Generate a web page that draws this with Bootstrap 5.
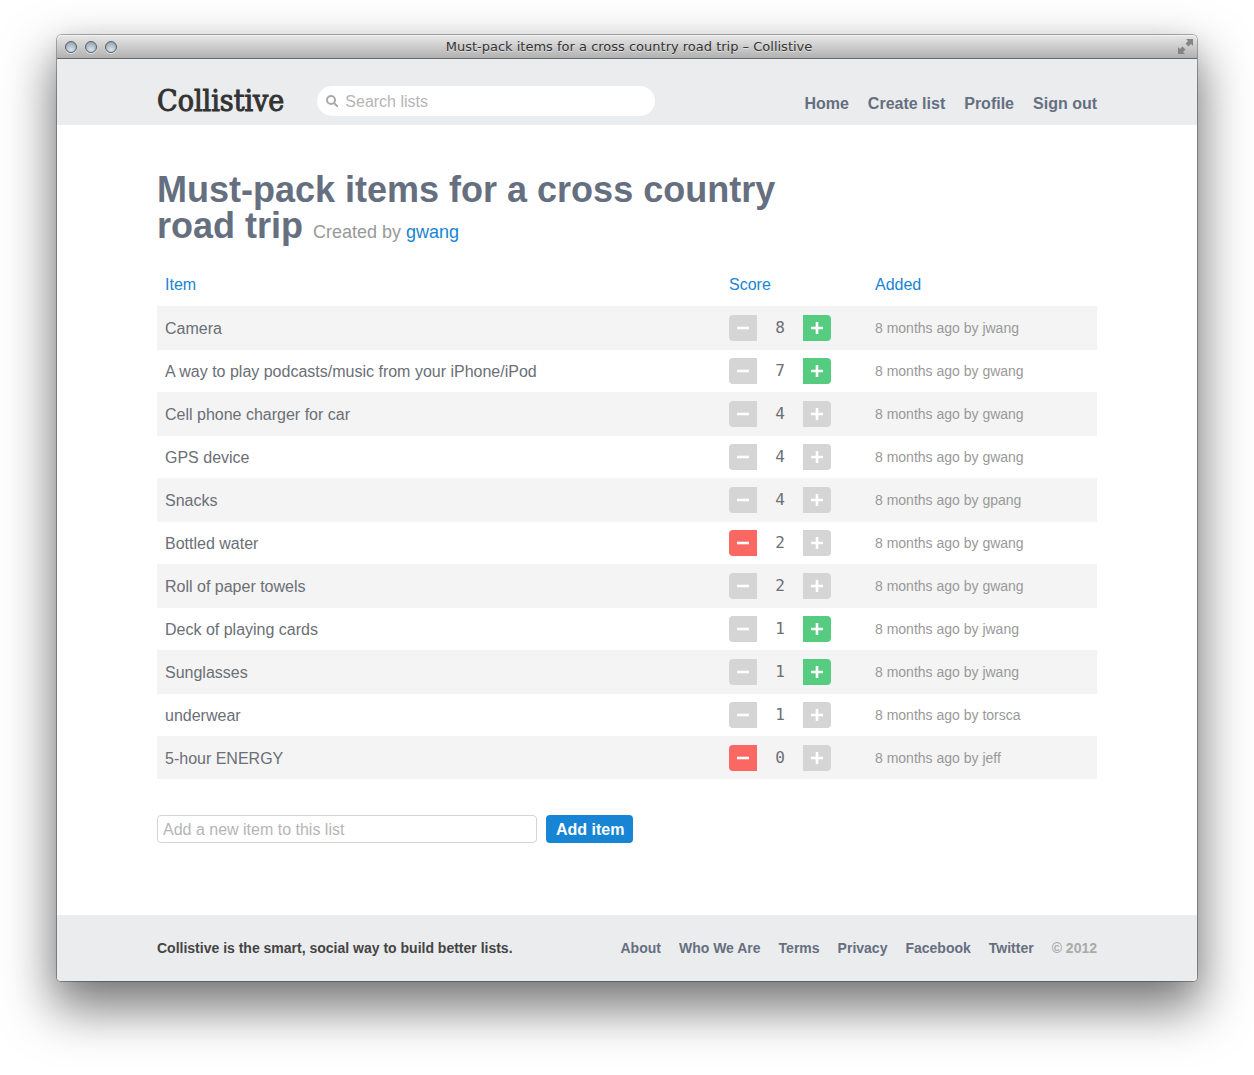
<!DOCTYPE html>
<html lang="en">
<head>
<meta charset="utf-8">
<meta name="viewport" content="width=device-width, initial-scale=1">
<title>Must-pack items for a cross country road trip – Collistive</title>
<link href="https://cdn.jsdelivr.net/npm/bootstrap@5.3.0/dist/css/bootstrap.min.css" rel="stylesheet">
<style>
  body { font-family: "Liberation Sans", Arial, sans-serif; font-size: 16px; line-height: 24px; color: #6b6f76; background: #fff; }
  a { color: #1785d3; text-decoration: none; }
  a:hover { text-decoration: underline; }
  .app-window { margin: 35px 57px 94px; border-radius: 5px 5px 4px 4px; background: #fff;
    box-shadow: 0 0 0 1px rgba(0,0,0,.3), 0 24px 50px 4px rgba(0,0,0,.52), 0 4px 20px rgba(0,0,0,.06); }
  .title-bar { height: 24px; padding: 0 4px 0 8px; border-radius: 5px 5px 0 0; border-bottom: 1px solid #686868;
    background: linear-gradient(#e8e8e8, #b1b1b1); box-shadow: inset 0 1px 0 #f3f3f3; }
  .title-text { font: 13px/22px "DejaVu Sans", sans-serif; color: #333; text-shadow: 0 1px 0 rgba(255,255,255,.5); }
  .side-slot { width: 60px; }
  .light { width: 12px; height: 12px; border-radius: 50%; border: 1px solid #56616a; background: radial-gradient(circle at 50% 80%, #dbe5ec, #8799a8); box-shadow: 0 1px 0 rgba(255,255,255,.6); }
  .page-wrap { max-width: 964px; padding: 0 12px; margin: 0 auto; }
  .site-band { background: #ebecee; }
  .site-head { min-height: 66px; padding-top: 17px; }
  .brand { font: 30px/36px "DejaVu Serif Condensed", "DejaVu Serif", serif; font-stretch: condensed; color: #333; -webkit-text-stroke: 1px #333; }
  .brand:hover { text-decoration: none; }
  .search-pill { width: 338px; height: 30px; border-radius: 15px; background: #fff; padding: 0 12px 0 9px; margin-left: 33px; gap: 7px; }
  .search-pill input { border: 0; outline: 0; background: none; padding: 2px 0 0; }
  ::placeholder { color: #b5b5b5 !important; opacity: 1; }
  .main-nav a, .foot-nav a { color: #656f80; font-weight: bold; }
  .main-nav { gap: 19px; padding-top: 6px; }
  .list-title { font-size: 36px; line-height: 36px; font-weight: bold; color: #656f80; max-width: 640px; margin: 0; padding-top: 47px; }
  .list-title span { font-size: 18px; font-weight: normal; color: #999; }
  .item-table { width: 100%; margin: 13px 0 36px; table-layout: fixed; }
  .item-table th { font-weight: normal; height: 43px; padding: 0 8px; }
  .item-table td { height: 43px; padding: 0 8px; }
  .item-table td:first-child { padding-top: 2px; }
  .item-table tbody tr:nth-child(odd) { background: #f4f4f4; }
  .item-table tbody tr:nth-child(odd):not(:last-child) { box-shadow: 0 1px 0 #f4f4f4; }
  .item-table .added { font-size: 14px; color: #999; }
  .col-score { width: 146px; }
  .col-added { width: 230px; }
  .vote { width: 28px; height: 26px; border: 0; padding: 0; background: #d5d5d5; display: flex; align-items: center; justify-content: center; }
  .vote-down { border-radius: 4px 0 0 4px; }
  .vote-up { border-radius: 0 4px 4px 0; }
  .vote-down.voted { background: #fb6863; }
  .vote-up.voted { background: #56cc80; }
  .points { width: 46px; text-align: center; font: 16px/24px "DejaVu Sans Mono", monospace; }
  .new-item { width: 380px; height: 28px; border: 1px solid #d5d5d5; border-radius: 4px; padding: 1px 5px 0; }
  .btn-add { height: 28px; border: 0; border-radius: 4px; background: #1785d3; color: #fff; font-weight: bold; padding: 2px 9px 0 10px; margin-left: 9px; line-height: 26px; }
  .site-foot { min-height: 66px; font-size: 14px; font-weight: bold; margin-top: 72px; border-radius: 0 0 4px 4px; }
  .site-foot .page-wrap { min-height: 66px; }
  .tagline { color: #444; }
  .foot-nav { gap: 18px; color: #aaa; }
</style>
</head>
<body>
<div class="app-window">
  <div class="title-bar d-flex align-items-center justify-content-between">
    <div class="side-slot d-flex gap-2"><i class="light"></i><i class="light"></i><i class="light"></i></div>
    <div class="title-text">Must-pack items for a cross country road trip – Collistive</div>
    <div class="side-slot d-flex justify-content-end">
      <svg width="15" height="15" viewBox="0 0 15 15" fill="#858585" aria-hidden="true"><path d="M8 0H15V7L13 5L10.500 7.500L7.500 4.500L10 2ZM7 15H0V8L2 10L4.500 7.500L7.500 10.500L5 13Z"/></svg>
    </div>
  </div>
  <header class="site-band">
    <div class="page-wrap">
      <div class="site-head d-flex align-items-center justify-content-between">
        <div class="d-flex align-items-center">
          <a class="brand" href="#">Collistive</a>
          <form class="search-pill d-flex align-items-center" role="search">
            <svg width="12" height="12" viewBox="0 0 12 12" fill="none" stroke="#aaa" stroke-width="2" aria-hidden="true"><circle cx="5" cy="5" r="4"/><path d="M8 8l4 4"/></svg>
            <input class="flex-grow-1" type="text" placeholder="Search lists" aria-label="Search lists">
          </form>
        </div>
        <nav class="main-nav d-flex"><a href="#">Home</a><a href="#">Create list</a><a href="#">Profile</a><a href="#">Sign out</a></nav>
      </div>
    </div>
  </header>
  <main class="page-wrap">
    <h1 class="list-title">Must-pack items for a cross country road trip <span>Created by <a href="#">gwang</a></span></h1>
    <table class="item-table">
      <colgroup><col><col class="col-score"><col class="col-added"></colgroup>
      <thead><tr><th><a href="#">Item</a></th><th><a href="#">Score</a></th><th><a href="#">Added</a></th></tr></thead>
      <tbody id="items"></tbody>
    </table>
    <form class="d-flex">
      <input class="new-item" type="text" placeholder="Add a new item to this list" aria-label="Add a new item to this list">
      <button class="btn-add" type="button">Add item</button>
    </form>
  </main>
  <footer class="site-band site-foot">
    <div class="page-wrap d-flex align-items-center justify-content-between">
      <span class="tagline">Collistive is the smart, social way to build better lists.</span>
      <nav class="foot-nav d-flex"><a href="#">About</a><a href="#">Who We Are</a><a href="#">Terms</a><a href="#">Privacy</a><a href="#">Facebook</a><a href="#">Twitter</a><span>© 2012</span></nav>
    </div>
  </footer>
</div>
<script>
  // name, score, own vote (-1, 0, 1), author
  const items = [
    ["Camera", 8, 1, "jwang"],
    ["A way to play podcasts/music from your iPhone/iPod", 7, 1, "gwang"],
    ["Cell phone charger for car", 4, 0, "gwang"],
    ["GPS device", 4, 0, "gwang"],
    ["Snacks", 4, 0, "gpang"],
    ["Bottled water", 2, -1, "gwang"],
    ["Roll of paper towels", 2, 0, "gwang"],
    ["Deck of playing cards", 1, 1, "jwang"],
    ["Sunglasses", 1, 1, "jwang"],
    ["underwear", 1, 0, "torsca"],
    ["5-hour ENERGY", 0, -1, "jeff"]
  ];
  const icon = d => `<svg width="12" height="12" viewBox="0 0 12 12" stroke="#fff" stroke-width="2.600" aria-hidden="true"><path d="${d}"/></svg>`;
  document.getElementById("items").innerHTML = items.map(([name, score, vote, by]) => `<tr>
    <td>${name}</td>
    <td><div class="d-flex align-items-center">
      <button type="button" class="vote vote-down ${vote < 0 ? "voted" : ""}" aria-label="Vote down">${icon("M0 6H12")}</button>
      <span class="points">${score}</span>
      <button type="button" class="vote vote-up ${vote > 0 ? "voted" : ""}" aria-label="Vote up">${icon("M0 6H12M6 0V12")}</button>
    </div></td>
    <td class="added">8 months ago by ${by}</td></tr>`).join("");
</script>
<script src="https://cdn.jsdelivr.net/npm/bootstrap@5.3.0/dist/js/bootstrap.bundle.min.js"></script>
</body>
</html>
